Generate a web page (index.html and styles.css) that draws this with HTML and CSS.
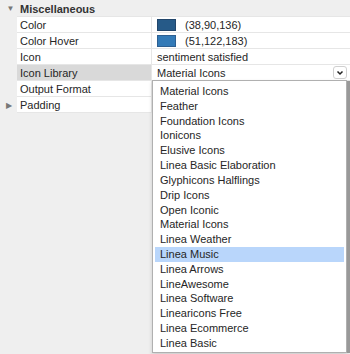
FILE: index.html
```html
<!DOCTYPE html>
<html lang="en">
<head>
    <meta charset="UTF-8">
    <title>Inspector</title>
    <link rel="stylesheet" href="styles.css">
</head>
<body>
    <div class="inspector">
        <div class="group">
            <span class="arrow">&#9660;</span>
            <span class="group-title">Miscellaneous</span>
        </div>
        <div class="row">
            <div class="label">Color</div>
            <div class="value"><span class="swatch dark"></span>(38,90,136)</div>
        </div>
        <div class="row">
            <div class="label">Color Hover</div>
            <div class="value"><span class="swatch light"></span>(51,122,183)</div>
        </div>
        <div class="row">
            <div class="label">Icon</div>
            <div class="value">sentiment satisfied</div>
        </div>
        <div class="row active">
            <div class="label">Icon Library</div>
            <div class="value select">
                <span>Material Icons</span>
                <span class="select-btn">
                    <svg width="8" height="6" viewBox="0 0 8 6"><path d="M1.5 1.5 L4 4 L6.5 1.5" fill="none" stroke="#222" stroke-width="1.5"/></svg>
                </span>
            </div>
        </div>
        <div class="row">
            <div class="label">Output Format</div>
            <div class="value"></div>
        </div>
        <div class="row collapsed">
            <div class="label"><span class="arrow small">&#9654;</span>Padding</div>
            <div class="value"></div>
        </div>

        <ul class="dropdown">
            <li>Material Icons</li>
            <li>Feather</li>
            <li>Foundation Icons</li>
            <li>Ionicons</li>
            <li>Elusive Icons</li>
            <li>Linea Basic Elaboration</li>
            <li>Glyphicons Halflings</li>
            <li>Drip Icons</li>
            <li>Open Iconic</li>
            <li>Material Icons</li>
            <li>Linea Weather</li>
            <li class="selected">Linea Music</li>
            <li>Linea Arrows</li>
            <li>LineAwesome</li>
            <li>Linea Software</li>
            <li>Linearicons Free</li>
            <li>Linea Ecommerce</li>
            <li>Linea Basic</li>
        </ul>
    </div>
</body>
</html>
```

FILE: styles.css
```css
:root {
    --panel-bg: #efefef;
    --row-bg: #ffffff;
    --line: #e6e6e6;
    --text: #262626;
    --active: #d9d9d9;
    --highlight: #b9d6fb;
}

body, html {
    margin: 0;
    padding: 0;
    width: 350px;
    height: 354px;
    overflow: hidden;
    background-color: var(--panel-bg);
    font-family: 'Liberation Sans', Arial, sans-serif;
    font-size: 11px;
    color: var(--text);
}

.inspector {
    position: relative;
    height: 354px;
}

.group {
    display: flex;
    align-items: center;
    height: 16px;
    padding-top: 1px;
    box-sizing: border-box;
}

.arrow {
    width: 20px;
    text-align: center;
    font-size: 8px;
    color: #777;
    padding-left: 1px;
    box-sizing: border-box;
}

.arrow.small {
    position: absolute;
    left: 0;
    width: 17px;
}

.group-title {
    font-weight: bold;
    color: #333;
}

.row {
    display: grid;
    grid-template-columns: 135px 1fr;
    height: 15px;
    margin-left: 17px;
    border-top: 1px solid var(--line);
}

.row.collapsed {
    border-bottom: 1px solid var(--line);
}

.label {
    display: flex;
    align-items: center;
    padding-left: 3px;
    padding-top: 1px;
    background-color: var(--row-bg);
    border-right: 1px solid var(--line);
}

.row.active .label {
    background-color: var(--active);
}

.value {
    display: flex;
    align-items: center;
    padding-left: 5px;
    padding-top: 1px;
    background-color: var(--row-bg);
}

.swatch {
    width: 19px;
    height: 12px;
    margin-right: 9px;
    margin-top: -1px;
    border: 1px solid #22466b;
    box-sizing: border-box;
}

.swatch.dark {
    background-color: rgb(38, 90, 136);
}

.swatch.light {
    background-color: rgb(51, 122, 183);
    border-color: #2d5f91;
}

.select {
    justify-content: space-between;
    padding-right: 3px;
    padding-top: 0;
}

.select-btn {
    display: flex;
    align-items: center;
    justify-content: center;
    width: 14px;
    height: 13px;
    border: 1px solid #d0d0d0;
    border-radius: 3px;
    background: #fff;
    box-sizing: border-box;
}

.dropdown {
    position: absolute;
    left: 152px;
    top: 80px;
    width: 195px;
    height: 273px;
    margin: 0;
    padding: 3px 2px 0 2px;
    list-style: none;
    background: #fff;
    border: 1px solid #b0b0b0;
    box-sizing: border-box;
    box-shadow: 0 2px 4px rgba(0, 0, 0, 0.15);
}

.dropdown::after {
    content: '';
    position: absolute;
    top: 0;
    right: -4px;
    width: 3px;
    height: 272px;
    background: #999;
}

.dropdown li {
    height: 14.82px;
    line-height: 14.82px;
    padding-left: 5px;
}

.dropdown li.selected {
    background-color: var(--highlight);
}
```
